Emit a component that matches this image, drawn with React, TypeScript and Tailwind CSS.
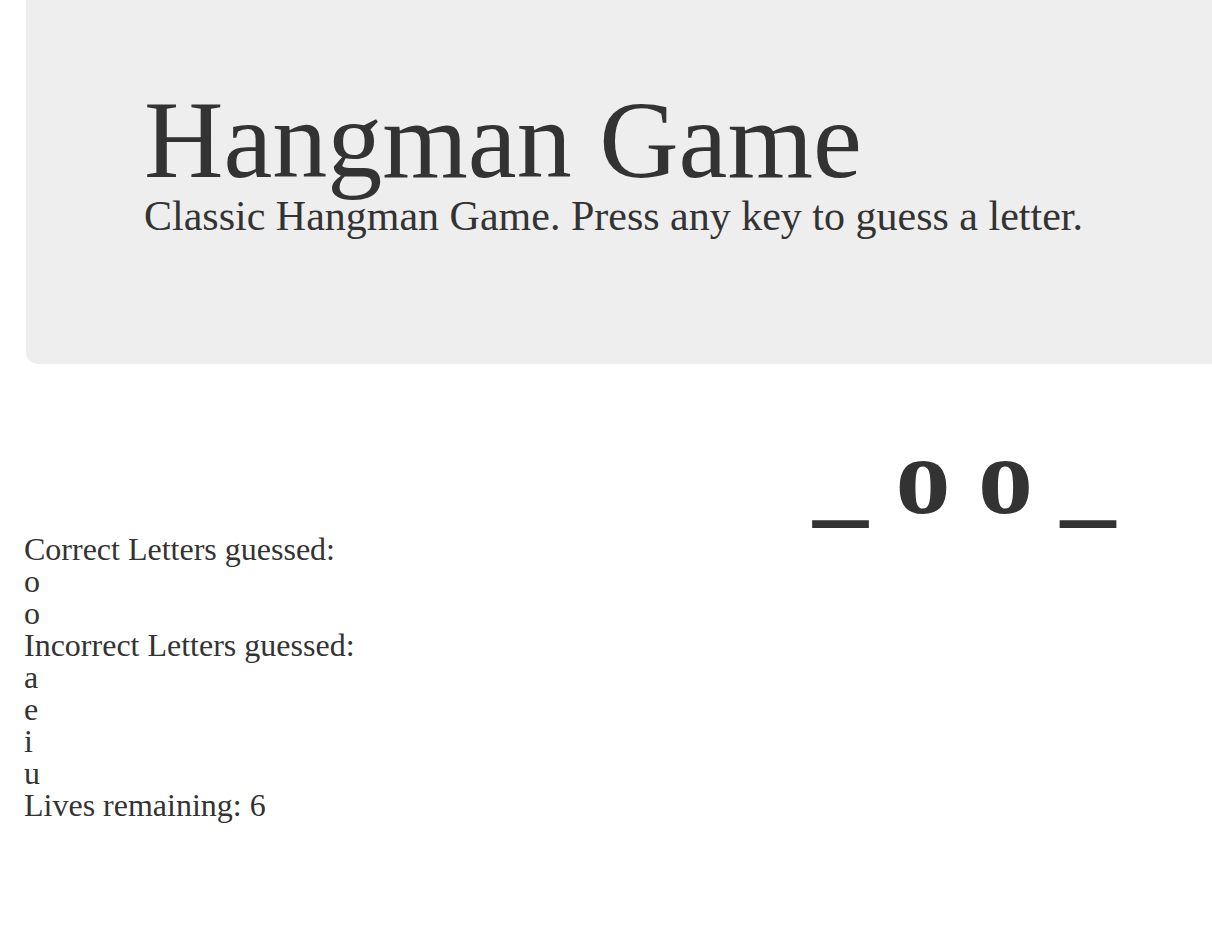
import React from 'react';

const correct = ['o', 'o'];
const incorrect = ['a', 'e', 'i', 'u'];

export default function App() {
  return (
    <div className="min-h-screen bg-white font-['Liberation_Serif','Times_New_Roman',serif] text-[#333]">
      <div className="ml-[26px] bg-[#eee] rounded-bl-[12px] pl-[118px] pt-[85px] pb-[127px]">
        <h1 className="text-[110px] leading-[110px] font-normal">Hangman Game</h1>
        <p className="text-[42px] leading-[42px]">Classic Hangman Game. Press any key to guess a letter.</p>
      </div>

      <div className="mt-[57px] pl-[813px] text-[110px] leading-[110px] font-bold whitespace-pre">_ o o _</div>

      <div className="mt-[2px] pl-[24px] text-[32px] leading-[32px]">
        <div>Correct Letters guessed:</div>
        {correct.map((l, i) => (
          <div key={`c-${i}`}>{l}</div>
        ))}
        <div>Incorrect Letters guessed:</div>
        {incorrect.map((l, i) => (
          <div key={`i-${i}`}>{l}</div>
        ))}
        <div>Lives remaining: 6</div>
      </div>
    </div>
  );
}
